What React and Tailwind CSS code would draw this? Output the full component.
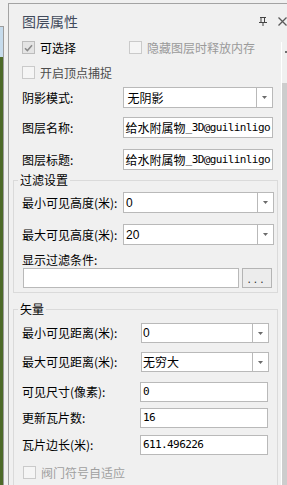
import React from 'react';

const Check = ({ checked }) => (
  checked ? (
    <span className="flex w-[13px] h-[13px] shrink-0 items-center justify-center border border-[#bcbcbc] bg-[#e4e4e4]">
      <svg width="9" height="8" viewBox="0 0 9 8">
        <path d="M1 4.2l2.4 2.4L8 1.2" fill="none" stroke="#8a8a8a" strokeWidth="1.5" />
      </svg>
    </span>
  ) : (
    <span className="block w-[13px] h-[13px] shrink-0 border border-[#cacaca] bg-[#f5f5f5]" />
  )
);

const Arrow = () => (
  <div className="w-[16px] h-full border-l border-[#b9b9b9] flex items-center justify-center">
    <svg width="5" height="3" viewBox="0 0 5 3">
      <path d="M0 0h5L2.5 3z" fill="#6b6b6b" />
    </svg>
  </div>
);

const Combo = ({ value, boxClass, textClass }) => (
  <div className={boxClass}>
    <div className={textClass}>{value}</div>
    <Arrow />
  </div>
);

const Mono = ({ children }) => (
  <span className="font-['DejaVu_Sans_Mono','Noto_Sans_CJK_SC',monospace] text-[11px] tracking-[-0.6px]">{children}</span>
);

export default function App() {
  return (
    <div className="w-[287px] h-[485px] bg-[#f0f0f0] flex overflow-hidden font-['Noto_Sans_CJK_SC','Noto_Sans',sans-serif] text-[12px] leading-[16px] text-black">
      {/* window behind, on the left */}
      <div className="w-[4px] flex flex-col">
        <div className="h-[26px]" />
        <div className="flex-1 flex flex-col border-t border-r border-[#9c9c9c]">
          <div className="h-[30px] bg-[#c6dbec]" />
          <div className="flex-1 bg-[#4d6a29]" />
        </div>
      </div>
      <div className="w-[4px]" />

      <div className="flex-1 flex flex-col pt-[3px] min-w-0">
        <div className="flex-1 flex flex-col border-t border-l border-[#a3a3a3] min-h-0">
          {/* title bar */}
          <div className="h-[34px] flex items-center pl-[13px]">
            <span className="text-[14px] text-[#414a5c] leading-[18px]">图层属性</span>
            <div className="ml-auto flex items-center">
              <svg width="8" height="9" viewBox="0 0 8 9">
                <path d="M1 0.5h6M2 0.5v5M5.5 0.5v5M0 5.5h8M4 5.5v3.5" fill="none" stroke="#444" strokeWidth="1" />
              </svg>
              <svg className="ml-[11px]" width="9" height="9" viewBox="0 0 9 9">
                <path d="M0.5 0.5l8 8M8.5 0.5l-8 8" fill="none" stroke="#5a5a5a" strokeWidth="1.3" />
              </svg>
            </div>
          </div>

          <div className="flex flex-1 min-h-0">
            <div className="flex-1 flex flex-col min-w-0">
              <div className="pl-[13px] pr-[8px]">
                <div className="flex h-[19px] items-center">
                  <div className="w-[107px] flex items-center">
                    <Check checked />
                    <span className="ml-[5px]">可选择</span>
                  </div>
                  <Check />
                  <span className="ml-[5px] text-[#9a9a9a] whitespace-nowrap">隐藏图层时释放内存</span>
                </div>
                <div className="flex h-[19px] mt-[6px] items-center">
                  <Check />
                  <span className="ml-[5px] text-[#4c4c4c]">开启顶点捕捉</span>
                </div>
                <div className="flex h-[21px] mt-[5px] items-center">
                  <span className="w-[101px]">阴影模式:</span>
                  <Combo
                    value="无阴影"
                    boxClass="flex w-[151px] h-full bg-white border border-[#b9b9b9]"
                    textClass="flex-1 flex items-center pl-[4px]"
                  />
                </div>
                <div className="flex h-[21px] mt-[9px] items-center">
                  <span className="w-[101px]">图层名称:</span>
                  <div className="w-[151px] h-full flex items-center pl-[2px] bg-white border border-[#b9b9b9] overflow-hidden whitespace-nowrap">
                    给水附属物<Mono>_3D@guilinligo:</Mono>
                  </div>
                </div>
                <div className="flex h-[21px] mt-[11px] items-center">
                  <span className="w-[101px]">图层标题:</span>
                  <div className="w-[151px] h-full flex items-center pl-[2px] bg-white border border-[#b9b9b9] overflow-hidden whitespace-nowrap">
                    给水附属物<Mono>_3D@guilinligo:</Mono>
                  </div>
                </div>
              </div>

              <fieldset className="ml-[4px] mr-[3px] mt-[2px] border border-[#dadada] pl-[8px] pr-[3px] pb-[4px]">
                <legend className="-ml-[4px] px-[2px] leading-[16px]">过滤设置</legend>
                <div className="flex h-[21px] mt-[4px] items-center">
                  <span className="w-[101px] whitespace-nowrap">最小可见高度(米):</span>
                  <Combo
                    value="0"
                    boxClass="flex w-[151px] h-full bg-white border border-[#b9b9b9]"
                    textClass="flex-1 flex items-center pl-[2px] font-['Liberation_Sans',sans-serif]"
                  />
                </div>
                <div className="flex h-[21px] mt-[11px] items-center">
                  <span className="w-[101px] whitespace-nowrap">最大可见高度(米):</span>
                  <Combo
                    value="20"
                    boxClass="flex w-[151px] h-full bg-white border border-[#b9b9b9]"
                    textClass="flex-1 flex items-center pl-[2px] font-['Liberation_Sans',sans-serif]"
                  />
                </div>
                <div className="mt-[7px] h-[16px]">显示过滤条件:</div>
                <div className="flex h-[20px]">
                  <div className="ml-[1px] w-[216px] h-full bg-white border border-[#b9b9b9]" />
                  <div className="ml-[3px] w-[30px] h-full flex items-end justify-center pb-[2px] bg-[#ececec] border border-[#b4b4b4] font-['Liberation_Sans',sans-serif] text-[12px] leading-[12px] tracking-[3px] text-[#333]">
                    ...
                  </div>
                </div>
              </fieldset>

              <fieldset className="ml-[4px] mr-[3px] mt-[8px] border border-[#dadada] pl-[8px] pr-[3px]">
                <legend className="-ml-[4px] px-[2px] leading-[16px]">矢量</legend>
                <div className="flex h-[20px] mt-[6px] items-center">
                  <span className="w-[119px] whitespace-nowrap">最小可见距离(米):</span>
                  <Combo
                    value="0"
                    boxClass="flex w-[128px] h-full bg-white border border-[#b9b9b9]"
                    textClass="flex-1 flex items-start pt-[1px] pl-[1px] font-['Liberation_Sans',sans-serif]"
                  />
                </div>
                <div className="flex h-[20px] mt-[9px] items-center">
                  <span className="w-[119px] whitespace-nowrap">最大可见距离(米):</span>
                  <Combo
                    value="无穷大"
                    boxClass="flex w-[128px] h-full bg-white border border-[#b9b9b9]"
                    textClass="flex-1 flex items-center pl-[1px]"
                  />
                </div>
                <div className="flex h-[20px] mt-[10px] items-center">
                  <span className="w-[118px] whitespace-nowrap">可见尺寸(像素):</span>
                  <div className="w-[128px] h-full flex items-center pl-[2px] bg-white border border-[#b9b9b9]">
                    <Mono>0</Mono>
                  </div>
                </div>
                <div className="flex h-[20px] mt-[6px] items-center">
                  <span className="w-[118px]">更新瓦片数:</span>
                  <div className="w-[128px] h-full flex items-center pl-[2px] bg-white border border-[#b9b9b9]">
                    <Mono>16</Mono>
                  </div>
                </div>
                <div className="flex h-[20px] mt-[7px] items-center">
                  <span className="w-[118px]">瓦片边长(米):</span>
                  <div className="w-[128px] h-full flex items-center pl-[2px] bg-white border border-[#b9b9b9]">
                    <Mono>611.496226</Mono>
                  </div>
                </div>
                <div className="flex h-[13px] mt-[11px] mb-[20px] items-center">
                  <span className="ml-[1px]"><Check /></span>
                  <span className="ml-[5px] text-[#a0a0a0]">阀门符号自适应</span>
                </div>
              </fieldset>
            </div>

            {/* scrollbar */}
            <div className="w-[6px] mt-[4px] flex flex-col border-l border-white">
              <div className="h-[41px] pt-[9px] pl-[3px]">
                <div className="w-[2px] h-[2px] bg-[#707070]" />
              </div>
              <div className="flex-1 bg-[#cdcdcd]" />
            </div>
          </div>
        </div>
      </div>
    </div>
  );
}
